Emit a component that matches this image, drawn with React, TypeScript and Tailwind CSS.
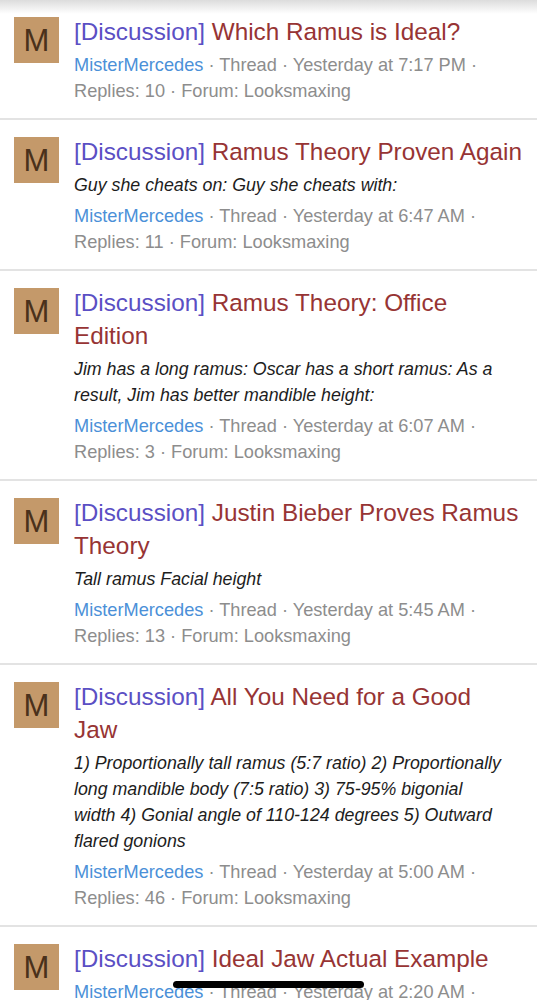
import React from "react";

interface ThreadRowProps {
  title: string;
  snippet?: string;
  time: string;
  replies: number;
}

// titles break where the forum broke them
const threads: ThreadRowProps[] = [
  { title: "Which Ramus is Ideal?", time: "Yesterday at 7:17 PM", replies: 10 },
  {
    title: "Ramus Theory Proven Again",
    snippet: "Guy she cheats on: Guy she cheats with:",
    time: "Yesterday at 6:47 AM",
    replies: 11,
  },
  {
    title: "Ramus Theory: Office\nEdition",
    snippet:
      "Jim has a long ramus: Oscar has a short ramus: As a result, Jim has better mandible height:",
    time: "Yesterday at 6:07 AM",
    replies: 3,
  },
  {
    title: "Justin Bieber Proves Ramus\nTheory",
    snippet: "Tall ramus Facial height",
    time: "Yesterday at 5:45 AM",
    replies: 13,
  },
  {
    title: "All You Need for a Good\nJaw",
    snippet:
      "1) Proportionally tall ramus (5:7 ratio) 2) Proportionally long mandible body (7:5 ratio) 3) 75-95% bigonial width 4) Gonial angle of 110-124 degrees 5) Outward flared gonions",
    time: "Yesterday at 5:00 AM",
    replies: 46,
  },
  {
    title: "Ideal Jaw Actual Example",
    time: "Yesterday at 2:20 AM",
    replies: 8,
  },
];

const ThreadRow: React.FC<ThreadRowProps> = ({ title, snippet, time, replies }) => {
  return (
    <div className="flex border-b-2 border-[#e3e3e3] pl-[14px] pr-2 pt-[15px] pb-[14px]">
      <div className="mt-[2px] flex h-[46px] w-[45px] shrink-0 items-center justify-center bg-[#c4996a] text-[31px] leading-none text-[#4a311b]">
        M
      </div>
      <div className="ml-[15px] flex min-w-0 flex-col gap-1">
        <a className="whitespace-pre-line text-[24.3px] leading-[33px] text-[#973434]">
          <span className="text-[#5b4fc4]">[Discussion]</span> {title}
        </a>
        {snippet && (
          <p className="mb-px max-w-[432px] text-[17.8px] italic leading-[26px] text-[#1d1d1d]">
            {snippet}
          </p>
        )}
        <div className="text-[18.2px] leading-[26px] text-[#8d8d8d]">
          <span className="text-[#4b90d8]">MisterMercedes</span> · Thread · {time} ·
          <br />
          Replies: {replies} · Forum: Looksmaxing
        </div>
      </div>
    </div>
  );
};

export default function App() {
  return (
    <div
      className="relative h-[1000px] w-[537px] overflow-hidden bg-white"
      style={{ fontFamily: '"Liberation Sans", Arial, sans-serif' }}
    >
      <div className="pointer-events-none absolute inset-x-0 top-0 h-[14px] bg-gradient-to-b from-[#dcdcdc] to-white/0" />
      {threads.map((t) => (
        <ThreadRow key={t.title} {...t} />
      ))}
      <div className="absolute bottom-[12px] left-[173px] h-[7px] w-[191px] rounded-full bg-black" />
    </div>
  );
}
